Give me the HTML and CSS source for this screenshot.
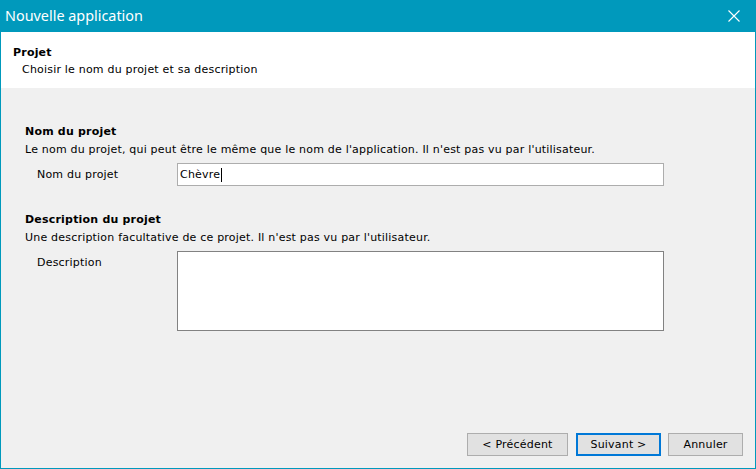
FILE: index.html
```html
<!DOCTYPE html>
<html lang="fr">
<head>
<meta charset="utf-8">
<title>Nouvelle application</title>
<link rel="stylesheet" href="styles.css">
</head>
<body>
<div class="window">
  <div class="titlebar">
    <span class="title">Nouvelle application</span>
    <span class="close">
      <svg width="12" height="12" viewBox="0 0 12 12"><path d="M0.5 0.5 L11.5 11.5 M11.5 0.5 L0.5 11.5" stroke="#ffffff" stroke-width="1.1" fill="none"/></svg>
    </span>
  </div>
  <div class="header">
    <div class="h-title">Projet</div>
    <div class="h-sub">Choisir le nom du projet et sa description</div>
  </div>
  <div class="content">
    <section class="group">
      <div class="g-title">Nom du projet</div>
      <div class="g-desc">Le nom du projet, qui peut être le même que le nom de l'application. Il n'est pas vu par l'utilisateur.</div>
      <div class="field">
        <span class="label">Nom du projet</span>
        <div class="input">Chèvre<span class="caret"></span></div>
      </div>
    </section>
    <section class="group group-2">
      <div class="g-title">Description du projet</div>
      <div class="g-desc">Une description facultative de ce projet. Il n'est pas vu par l'utilisateur.</div>
      <div class="field">
        <span class="label">Description</span>
        <div class="textarea"></div>
      </div>
    </section>
  </div>
  <div class="footer">
    <button class="btn btn-prev">&lt; Précédent</button>
    <button class="btn btn-next">Suivant &gt;</button>
    <button class="btn btn-cancel">Annuler</button>
  </div>
</div>
</body>
</html>
```

FILE: styles.css
```css
html, body {
  margin: 0;
  padding: 0;
  background: #f0f0f0;
}

.window {
  width: 756px;
  height: 469px;
  box-sizing: border-box;
  border: 1px solid #0099bc;
  border-top: none;
  display: flex;
  flex-direction: column;
  background: #f0f0f0;
  font-family: "DejaVu Sans", sans-serif;
  font-size: 11px;
  letter-spacing: 0.2px;
  color: #000;
}

.titlebar {
  height: 32px;
  margin: 0 -1px;
  background: #0099bc;
  display: flex;
  align-items: center;
  justify-content: space-between;
  color: #fff;
}

.title {
  font-family: "Noto Sans", "Open Sans", sans-serif;
  font-size: 14.4px;
  letter-spacing: 0;
  padding-left: 5px;
  line-height: 20px;
  margin-top: -1px;
}

.close {
  display: flex;
  margin-right: 16px;
}

.header {
  height: 56px;
  box-sizing: border-box;
  background: #fff;
  padding: 14px 0 0 12px;
}

.h-title {
  font-weight: bold;
  line-height: 14px;
}

.h-sub {
  line-height: 14px;
  margin-top: 3px;
  padding-left: 9px;
}

.content {
  flex: 1;
  padding: 37px 0 0 24px;
}

.g-title {
  font-weight: bold;
  line-height: 14px;
}

.g-desc {
  line-height: 14px;
  margin-top: 4px;
}

.field {
  display: flex;
  align-items: flex-start;
  margin-top: 6px;
}

.label {
  width: 152px;
  padding-left: 12px;
  box-sizing: border-box;
  line-height: 23px;
}

.input {
  width: 487px;
  height: 23px;
  box-sizing: border-box;
  border: 1px solid #adadad;
  background: #fff;
  padding: 0 2px;
  line-height: 21px;
  display: flex;
  align-items: center;
}

.caret {
  display: inline-block;
  width: 1px;
  height: 14px;
  background: #000;
  margin-left: 1px;
}

.group-2 {
  margin-top: 27px;
}

.textarea {
  width: 487px;
  height: 80px;
  box-sizing: border-box;
  border: 1px solid #828282;
  background: #fff;
}

.footer {
  display: flex;
  justify-content: flex-end;
  gap: 8px;
  padding: 0 12px 12px 0;
}

.btn {
  height: 23px;
  box-sizing: border-box;
  border: 1px solid #adadad;
  background: #e1e1e1;
  font-family: inherit;
  font-size: 11px;
  letter-spacing: 0.2px;
  color: #000;
  padding: 0;
  margin: 0;
  line-height: 21px;
}

.btn-prev { width: 101px; }
.btn-next {
  width: 85px;
  border: 2px solid #0078d7;
  line-height: 19px;
}
.btn-cancel { width: 75px; margin-left: -1px; }
```
